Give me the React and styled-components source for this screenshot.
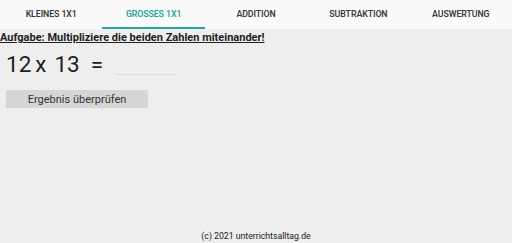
import React from 'react';
import styled, { createGlobalStyle } from 'styled-components';

const GlobalStyle = createGlobalStyle`
  html, body {
    margin: 0;
    padding: 0;
    height: 100%;
    background: #eeeeee;
    font-family: Roboto, "Liberation Sans", sans-serif;
  }
  #root {
    height: 100%;
  }
`;

const Page = styled.div`
  display: flex;
  flex-direction: column;
  min-height: 100vh;
`;

const TabBar = styled.nav`
  display: grid;
  grid-template-columns: repeat(5, 1fr);
  height: 29px;
  background: #fafafa;
`;

const Tab = styled.div`
  display: flex;
  align-items: center;
  justify-content: center;
  font-size: 8.8px;
  font-weight: 600;
  letter-spacing: -0.1px;
  color: ${props => (props.active ? '#26a69a' : '#3a3a3a')};
  border-bottom: 2px solid ${props => (props.active ? '#26a69a' : 'transparent')};
  box-sizing: border-box;
  padding-top: 1px;
`;

const Task = styled.h1`
  margin: 2px 0 0;
  font-size: 11px;
  font-weight: 700;
  color: #212121;
  text-decoration: underline;
  line-height: 13px;
`;

const Equation = styled.div`
  display: flex;
  align-items: center;
  padding: 6px 0 0 6px;
  font-size: 22.5px;
  color: #212121;
  line-height: 28px;
`;

const Operand = styled.span``;

const Operator = styled.span`
  margin: 0 ${props => props.after}px 0 ${props => props.before}px;
`;

const Answer = styled.input`
  width: 61px;
  margin-left: 12px;
  margin-top: -2px;
  border: none;
  border-bottom: 1px solid #dcdcdc;
  background: transparent;
  font: inherit;
  outline: none;
  padding: 0;
  height: 22px;
`;

const CheckButton = styled.button`
  margin: 12px 0 0 6px;
  width: 142px;
  height: 18px;
  border: none;
  border-radius: 0;
  background: #d6d6d6;
  color: #333333;
  font-family: Roboto, "Liberation Sans", sans-serif;
  font-size: 11px;
  padding: 0;
`;

const Footer = styled.footer`
  margin-top: auto;
  text-align: center;
  font-size: 8.7px;
  color: #212121;
  padding-bottom: 1px;
  line-height: 11px;
`;

const tabs = ['KLEINES 1X1', 'GROSSES 1X1', 'ADDITION', 'SUBTRAKTION', 'AUSWERTUNG'];

export default function App() {
  return (
    <Page>
      <GlobalStyle />
      <TabBar>
        {tabs.map(t => (
          <Tab key={t} active={t === 'GROSSES 1X1'}>{t}</Tab>
        ))}
      </TabBar>
      <Task>Aufgabe: Multipliziere die beiden Zahlen miteinander!</Task>
      <Equation>
        <Operand>12</Operand>
        <Operator before={4} after={8}>x</Operator>
        <Operand>13</Operand>
        <Operator before={11} after={0}>=</Operator>
        <Answer type="text" />
      </Equation>
      <div>
        <CheckButton>Ergebnis überprüfen</CheckButton>
      </div>
      <Footer>(c) 2021 unterrichtsalltag.de</Footer>
    </Page>
  );
}
